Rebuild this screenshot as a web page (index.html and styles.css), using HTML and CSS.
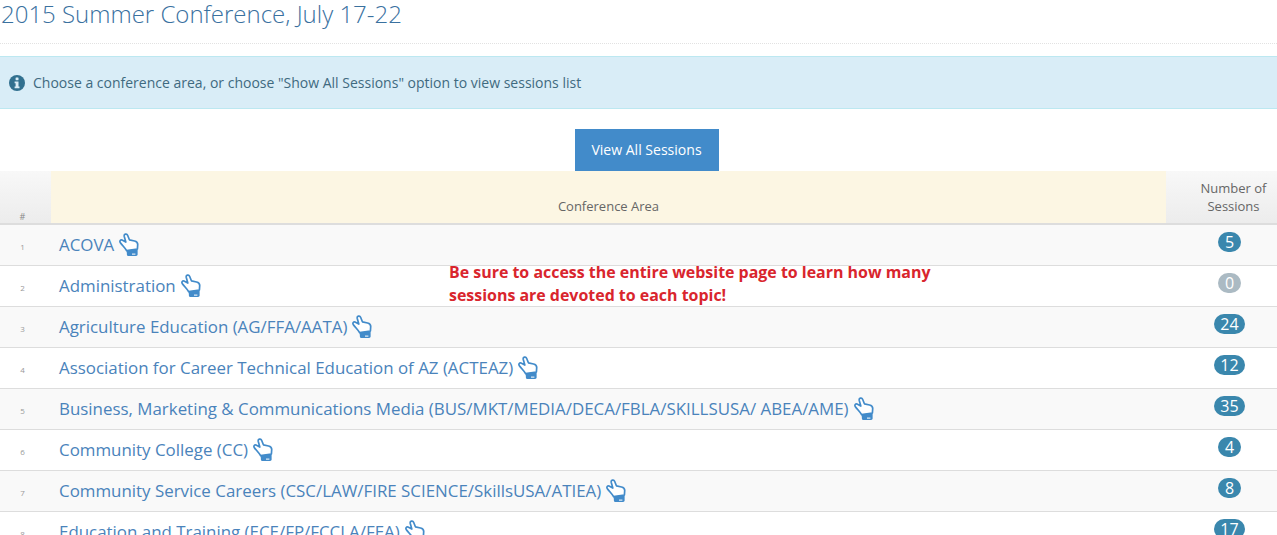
FILE: index.html
```html
<!DOCTYPE html>
<html lang="en">
<head>
<meta charset="utf-8">
<title>2015 Summer Conference</title>
<link rel="stylesheet" href="styles.css">
</head>
<body>
<svg class="defs" width="0" height="0" aria-hidden="true">
  <symbol id="hand" viewBox="0 0 20 24">
    <path d="M1.2 9.4 C0.4 8.2 1.6 6.4 3 7 L6.8 9 L5.2 3.2 C4.8 1 7.8 0.2 8.6 2.2 L10.4 6.8 L15.6 8 C17.6 8.5 18.8 9.6 18.7 11.6 L18.4 16 L7.6 17.6 C6.4 15 3.4 12.6 1.2 9.4 Z" fill="#fff" stroke="#428bca" stroke-width="1.7" stroke-linejoin="round"/>
    <path d="M7.6 17.6 L18.6 16 L18.6 21.6 C18.6 22.5 18 23 17 23 L9.6 23 C8.6 23 8 22.4 7.9 21.4 Z" fill="#428bca"/>
    <rect x="13" y="20.6" width="3.4" height="1" fill="#fff"/>
  </symbol>
</svg>
<main class="page">
  <header class="page-header">
    <h1>2015 Summer Conference, July 17-22</h1>
  </header>
  <div class="alert">
    <svg class="info" viewBox="0 0 16 16" aria-hidden="true">
      <circle cx="8" cy="8" r="8" fill="#31708f"/>
      <rect x="6.6" y="2.6" width="2.9" height="2.6" rx="0.5" fill="#d9edf7"/>
      <path d="M5.6 6.5 H9.5 V11.4 H10.5 V13.2 H5.6 V11.4 H6.6 V8.3 H5.6 Z" fill="#d9edf7"/>
    </svg>
    <span>Choose a conference area, or choose "Show All Sessions" option to view sessions list</span>
  </div>
  <div class="actions"><a class="btn" href="#">View All Sessions</a></div>
  <div class="table-wrap">
    <table class="areas">
      <colgroup><col class="c-num"><col class="c-area"><col class="c-count"></colgroup>
      <thead>
        <tr><th class="th-num">#</th><th class="th-area">Conference Area</th><th class="th-count">Number of Sessions</th></tr>
      </thead>
      <tbody>
        <tr><td class="num">1</td><td class="area"><a href="#">ACOVA</a><svg class="hand"><use href="#hand"/></svg></td><td class="count"><span class="badge">5</span></td></tr>
        <tr><td class="num">2</td><td class="area"><a href="#">Administration</a><svg class="hand"><use href="#hand"/></svg></td><td class="count"><span class="badge empty">0</span></td></tr>
        <tr><td class="num">3</td><td class="area"><a href="#">Agriculture Education (AG/FFA/AATA)</a><svg class="hand"><use href="#hand"/></svg></td><td class="count"><span class="badge">24</span></td></tr>
        <tr><td class="num">4</td><td class="area"><a href="#">Association for Career Technical Education of AZ (ACTEAZ)</a><svg class="hand"><use href="#hand"/></svg></td><td class="count"><span class="badge">12</span></td></tr>
        <tr><td class="num">5</td><td class="area"><a href="#">Business, Marketing &amp; Communications Media (BUS/MKT/MEDIA/DECA/FBLA/SKILLSUSA/ ABEA/AME)</a><svg class="hand"><use href="#hand"/></svg></td><td class="count"><span class="badge">35</span></td></tr>
        <tr><td class="num">6</td><td class="area"><a href="#">Community College (CC)</a><svg class="hand"><use href="#hand"/></svg></td><td class="count"><span class="badge">4</span></td></tr>
        <tr><td class="num">7</td><td class="area"><a href="#">Community Service Careers (CSC/LAW/FIRE SCIENCE/SkillsUSA/ATIEA)</a><svg class="hand"><use href="#hand"/></svg></td><td class="count"><span class="badge">8</span></td></tr>
        <tr><td class="num">8</td><td class="area"><a href="#">Education and Training (ECE/FP/FCCLA/FEA)</a><svg class="hand"><use href="#hand"/></svg></td><td class="count"><span class="badge">17</span></td></tr>
      </tbody>
    </table>
    <p class="note">Be sure to access the entire website page to learn how many sessions are devoted to each topic!</p>
  </div>
</main>
</body>
</html>
```
FILE: styles.css
```css
* { box-sizing: border-box; }
html, body { margin: 0; height: 100%; overflow: hidden; background: #fff; }
body { font-family: "Open Sans", sans-serif; font-size: 13px; color: #393939; }
.defs { display: block; height: 0; }
.page { display: block; }
.page-header { height: 44px; border-bottom: 1px dotted #e2e2e2; }
.page-header h1 { margin: 0; padding-left: 1px; font-size: 24px; font-weight: 300; line-height: 28px; color: #3a719f; }
.alert { margin-top: 12px; height: 53px; display: flex; align-items: center; gap: 8px; padding-left: 9px; background: #d9edf7; border: 1px solid #bce8f1; border-width: 1px 0; color: #3f6a80; font-size: 14px; }
.info { width: 16px; height: 16px; flex: none; }
.actions { margin-top: 20px; padding-left: 16px; display: flex; justify-content: center; }
.btn { display: block; width: 144px; height: 42px; line-height: 41px; text-align: center; background: #428bca; color: #fff; font-size: 14.05px; text-decoration: none; }
.table-wrap { position: relative; }
.areas { width: 100%; border-collapse: collapse; table-layout: fixed; }
.c-num { width: 51px; }
.c-count { width: 111px; }
.areas th { height: 53px; padding: 0 0 8px; vertical-align: bottom; font-size: 13px; font-weight: 400; line-height: 18px; color: #666; text-align: center; background: linear-gradient(#f8f8f8, #ececec); border-bottom: 2px solid #ddd; }
.areas th.th-num { font-size: 9px; padding: 0 6px 0 0; line-height: 12px; color: #888; }
.areas th.th-area { background: #fcf6e3; color: #666; }
.areas th.th-count { padding: 0 0 8px 24px; }
.areas td { height: 41px; padding: 0; border-bottom: 1px solid #ddd; background: #fff; }
.areas tbody tr:nth-child(odd) td { background: #f9f9f9; }
.areas .num { font-size: 8px; color: #999; text-align: center; padding: 4px 6px 0 0; }
.areas .area { padding-left: 8px; font-size: 16.9px; white-space: nowrap; }
.area a { color: #4a83bb; text-decoration: none; }
.hand { width: 20px; height: 24px; margin-left: 5px; vertical-align: -6px; }
.areas .count { text-align: center; vertical-align: top; padding: 7px 0 0 16px; }
.badge { display: inline-block; min-width: 23px; height: 20px; padding: 0 6px; border-radius: 10px; background: #3a87ad; color: #fff; font-size: 16px; line-height: 20px; text-align: center; }
.badge.empty { background: #abbac3; }
.note { position: absolute; left: 449px; top: 90px; width: 500px; margin: 0; font-size: 15.95px; font-weight: 700; line-height: 23px; color: #d9252d; }
```
